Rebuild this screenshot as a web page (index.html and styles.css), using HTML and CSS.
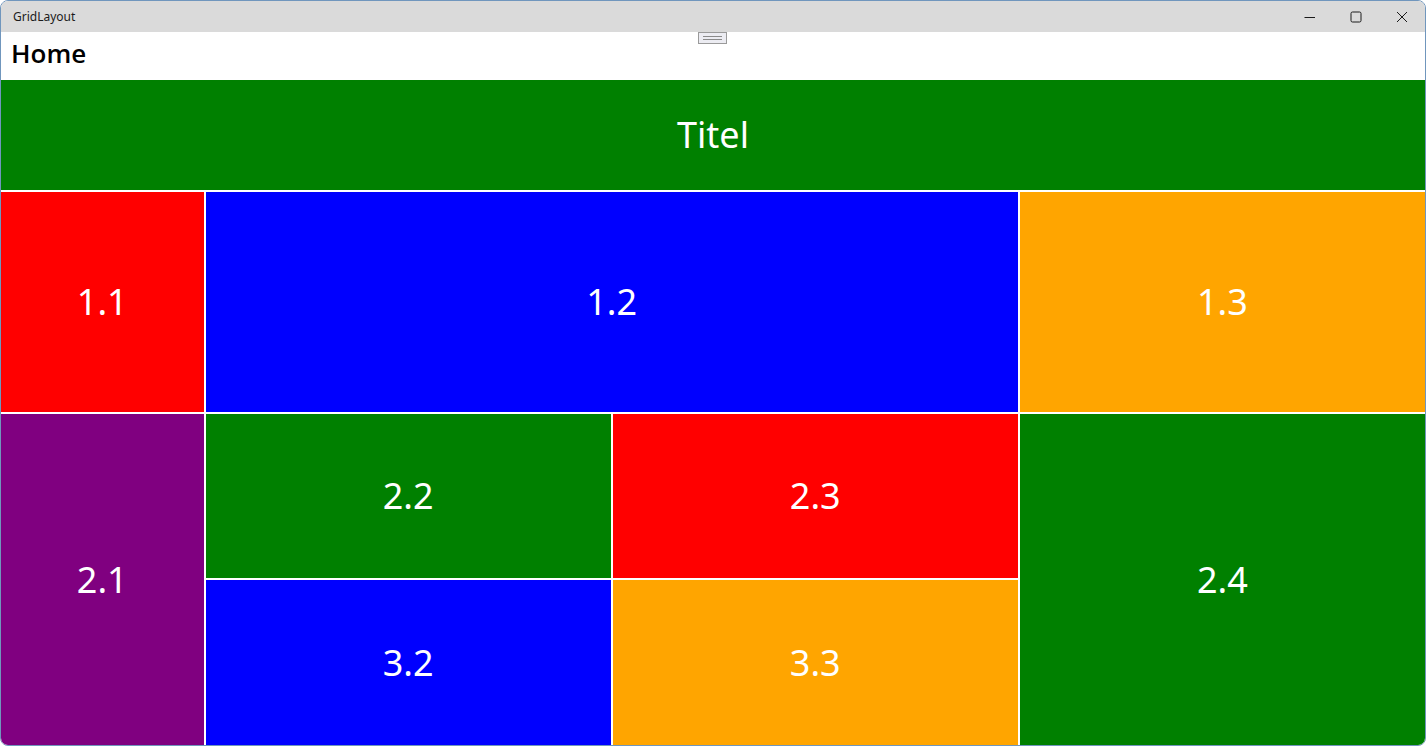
FILE: index.html
```html
<!DOCTYPE html>
<html>
<head>
<meta charset="utf-8">
<title>GridLayout</title>
<link rel="stylesheet" href="styles.css">
</head>
<body>
<div class="window">
  <div class="titlebar">
    <span class="app-title">GridLayout</span>
    <div class="controls">
      <div class="ctl">
        <svg width="12" height="12" viewBox="0 0 12 12"><path d="M0.5 6.5 H11" stroke="#1a1a1a" stroke-width="1" fill="none"/></svg>
      </div>
      <div class="ctl">
        <svg width="12" height="12" viewBox="0 0 12 12"><rect x="1" y="1" width="10" height="10" rx="1.5" stroke="#1a1a1a" stroke-width="1" fill="none"/></svg>
      </div>
      <div class="ctl">
        <svg width="12" height="12" viewBox="0 0 12 12"><path d="M1 1 L11 11 M11 1 L1 11" stroke="#1a1a1a" stroke-width="1" fill="none"/></svg>
      </div>
    </div>
  </div>
  <div class="navbar">
    <span class="page-title">Home</span>
    <div class="handle"><span class="handle-lines"></span></div>
  </div>
  <div class="grid">
    <div class="cell green title">Titel</div>
    <div class="cell red r2 c1">1.1</div>
    <div class="cell blue r2 c23">1.2</div>
    <div class="cell orange r2 c4">1.3</div>
    <div class="cell purple r34 c1">2.1</div>
    <div class="cell green r3 c2">2.2</div>
    <div class="cell red r3 c3">2.3</div>
    <div class="cell green r34 c4">2.4</div>
    <div class="cell blue r4 c2">3.2</div>
    <div class="cell orange r4 c3">3.3</div>
  </div>
</div>
</body>
</html>
```

FILE: styles.css
```css
html, body {
  margin: 0;
  padding: 0;
  background: #ffffff;
}

body {
  font-family: "Noto Sans", "Open Sans", sans-serif;
}

.window {
  width: 1426px;
  height: 746px;
  box-sizing: border-box;
  border: 1px solid #7096bd;
  border-radius: 8px;
  overflow: hidden;
  display: flex;
  flex-direction: column;
  background: #ffffff;
}

.titlebar {
  height: 31px;
  flex: 0 0 31px;
  background: #dadada;
  display: flex;
  align-items: center;
  justify-content: space-between;
}

.app-title {
  font-size: 12px;
  color: #1b1b1b;
  padding-left: 12px;
  line-height: 31px;
}

.controls {
  display: flex;
  height: 31px;
}

.ctl {
  width: 46px;
  height: 31px;
  display: flex;
  align-items: center;
  justify-content: center;
}

.navbar {
  position: relative;
  height: 48px;
  flex: 0 0 48px;
  background: #ffffff;
  display: flex;
  align-items: center;
}

.page-title {
  font-family: "Open Sans", "Noto Sans", sans-serif;
  font-size: 26px;
  font-weight: 600;
  color: #000000;
  padding-left: 10px;
  margin-top: -6px;
}

.handle {
  position: absolute;
  left: 697px;
  top: 0;
  width: 29px;
  height: 12px;
  box-sizing: border-box;
  background: #ececf2;
  border: 1px solid #9a9a9a;
  display: flex;
  align-items: center;
  justify-content: center;
}

.handle-lines {
  display: block;
  width: 19px;
  height: 2px;
  border-top: 1px solid #8a8a8a;
  border-bottom: 1px solid #8a8a8a;
}

.grid {
  flex: 1;
  display: grid;
  grid-template-columns: 1fr 2fr 2fr 2fr;
  grid-template-rows: 2fr 4fr 3fr 3fr;
  gap: 2px;
  background: #ffffff;
}

.cell {
  display: flex;
  align-items: center;
  justify-content: center;
  color: #ffffff;
  font-size: 36px;
}

.title {
  grid-column: 1 / 5;
  grid-row: 1;
  font-size: 36px;
}

.r2 { grid-row: 2; }
.r3 { grid-row: 3; }
.r4 { grid-row: 4; }
.r34 { grid-row: 3 / 5; }
.c1 { grid-column: 1; }
.c2 { grid-column: 2; }
.c3 { grid-column: 3; }
.c4 { grid-column: 4; }
.c23 { grid-column: 2 / 4; }

.green { background: #008000; }
.red { background: #ff0000; }
.blue { background: #0000ff; }
.orange { background: #ffa500; }
.purple { background: #800080; }
```
